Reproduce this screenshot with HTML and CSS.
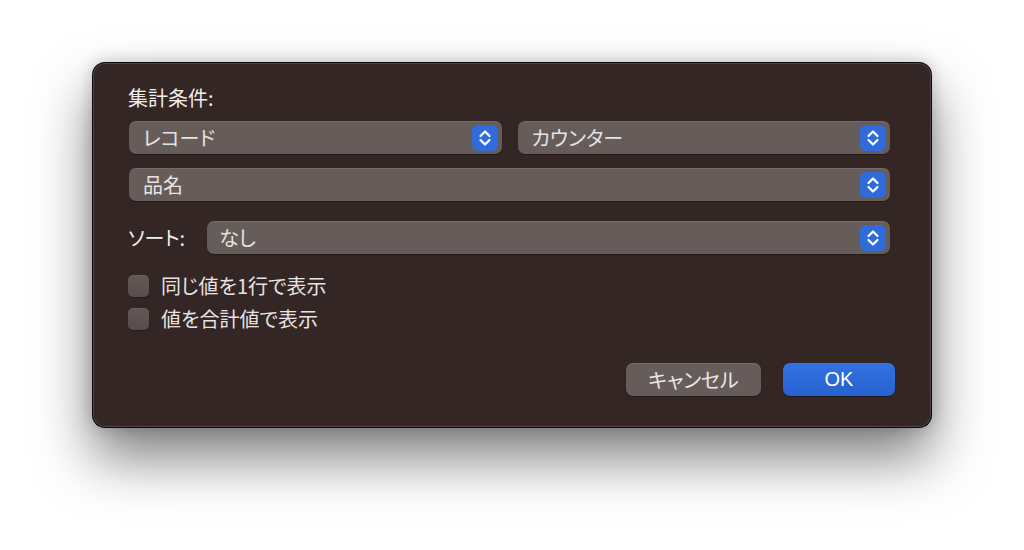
FILE: index.html
```html
<!doctype html>
<html lang="ja">
  <head>
    <meta charset="utf-8">
    <title>集計条件</title>
    <link rel="stylesheet" href="styles.css">
  </head>
  <body>
	<div class="dialog">
		<div class="label">集計条件:</div>
		<div class="row">
			<div class="popup">
				<span>レコード</span>
				<svg class="stepper" width="26" height="26" viewBox="0 0 26 26"><rect width="26" height="26" rx="6" fill="#2f6bdb"/><path d="M8.5 11 L13 6.5 L17.5 11 M8.5 15 L13 19.5 L17.5 15" fill="none" stroke="#fff" stroke-width="2.2" stroke-linecap="round" stroke-linejoin="round"/></svg>
			</div>
			<div class="popup">
				<span>カウンター</span>
				<svg class="stepper" width="26" height="26" viewBox="0 0 26 26"><rect width="26" height="26" rx="6" fill="#2f6bdb"/><path d="M8.5 11 L13 6.5 L17.5 11 M8.5 15 L13 19.5 L17.5 15" fill="none" stroke="#fff" stroke-width="2.2" stroke-linecap="round" stroke-linejoin="round"/></svg>
			</div>
		</div>
		<div class="row second">
			<div class="popup">
				<span>品名</span>
				<svg class="stepper" width="26" height="26" viewBox="0 0 26 26"><rect width="26" height="26" rx="6" fill="#2f6bdb"/><path d="M8.5 11 L13 6.5 L17.5 11 M8.5 15 L13 19.5 L17.5 15" fill="none" stroke="#fff" stroke-width="2.2" stroke-linecap="round" stroke-linejoin="round"/></svg>
			</div>
		</div>
		<div class="row sort">
			<div class="sort-label">ソート:</div>
			<div class="popup">
				<span>なし</span>
				<svg class="stepper" width="26" height="26" viewBox="0 0 26 26"><rect width="26" height="26" rx="6" fill="#2f6bdb"/><path d="M8.5 11 L13 6.5 L17.5 11 M8.5 15 L13 19.5 L17.5 15" fill="none" stroke="#fff" stroke-width="2.2" stroke-linecap="round" stroke-linejoin="round"/></svg>
			</div>
		</div>
		<div class="checks">
			<label class="check"><span class="box"></span>同じ値を1行で表示</label>
			<label class="check"><span class="box"></span>値を合計値で表示</label>
		</div>
		<div class="buttons">
			<button class="button cancel">キャンセル</button>
			<button class="button ok">OK</button>
		</div>
	</div>
  </body>
</html>
```

FILE: styles.css
```css
body
{
	margin: 0;
	padding: 62px 0 0 92px;
	box-sizing: border-box;
	min-height: 100vh;
	background: #fff;
	font-family: "Noto Sans CJK JP", "Liberation Sans", sans-serif;
	font-feature-settings: "palt";
	font-size: 20px;
	color: #e8e3e2;
}

.dialog
{
	box-sizing: border-box;
	width: 840px;
	height: 366px;
	padding: 23px 41px 0 35px;
	background: #332625;
	border: 1px solid rgba(0, 0, 0, 0.75);
	border-radius: 13px;
	box-shadow: inset 0 0 0 1px rgba(255, 255, 255, 0.14), 0 30px 55px rgba(0, 0, 0, 0.5), 0 0 16px rgba(0, 0, 0, 0.2);
	display: flex;
	flex-direction: column;
}

.label
{
	line-height: 24px;
	color: #f2eeed;
}

.row
{
	display: flex;
	gap: 16px;
	margin-top: 11px;
	margin-left: 1px;
}

.row.second
{
	margin-top: 14px;
}

.row.sort
{
	margin-top: 20px;
	margin-left: 0;
	gap: 22px;
	align-items: center;
}

.sort-label
{
	color: #f2eeed;
	white-space: nowrap;
}

.popup
{
	flex: 1;
	height: 33px;
	box-sizing: border-box;
	padding: 0 4px 0 14px;
	background: #665c5a;
	border-radius: 7px;
	box-shadow: inset 0 1px 0 rgba(255, 255, 255, 0.1), 0 1px 1px rgba(0, 0, 0, 0.35);
	display: flex;
	align-items: center;
	justify-content: space-between;
	line-height: 24px;
}

.sort .popup
{
	padding-left: 12px;
}

.stepper
{
	flex: none;
	display: block;
}

.checks
{
	display: flex;
	flex-direction: column;
	gap: 9px;
	margin-top: 20px;
}

.check
{
	display: flex;
	align-items: center;
	gap: 12px;
	line-height: 24px;
}

.box
{
	width: 21px;
	height: 22px;
	border-radius: 5px;
	background: linear-gradient(#625856, #574e4c);
	box-shadow: inset 0 1px 0 rgba(255, 255, 255, 0.06), 0 1px 1px rgba(0, 0, 0, 0.3);
}

.buttons
{
	display: flex;
	justify-content: flex-end;
	gap: 22px;
	margin-top: 32px;
	margin-right: -5px;
}

.button
{
	height: 33px;
	border: 0;
	border-radius: 7px;
	font-family: inherit;
	font-feature-settings: "palt";
	font-size: 20px;
	color: #ebe7e6;
	padding: 0;
	line-height: 33px;
}

.cancel
{
	width: 135px;
	background: #665c5a;
	box-shadow: inset 0 1px 0 rgba(255, 255, 255, 0.1), 0 1px 1px rgba(0, 0, 0, 0.35);
}

.ok
{
	width: 112px;
	background: linear-gradient(#3172e2, #2661cf);
	color: #fff;
	font-family: "Liberation Sans", "Noto Sans CJK JP", sans-serif;
	box-shadow: 0 1px 1px rgba(0, 0, 0, 0.35);
}
```
